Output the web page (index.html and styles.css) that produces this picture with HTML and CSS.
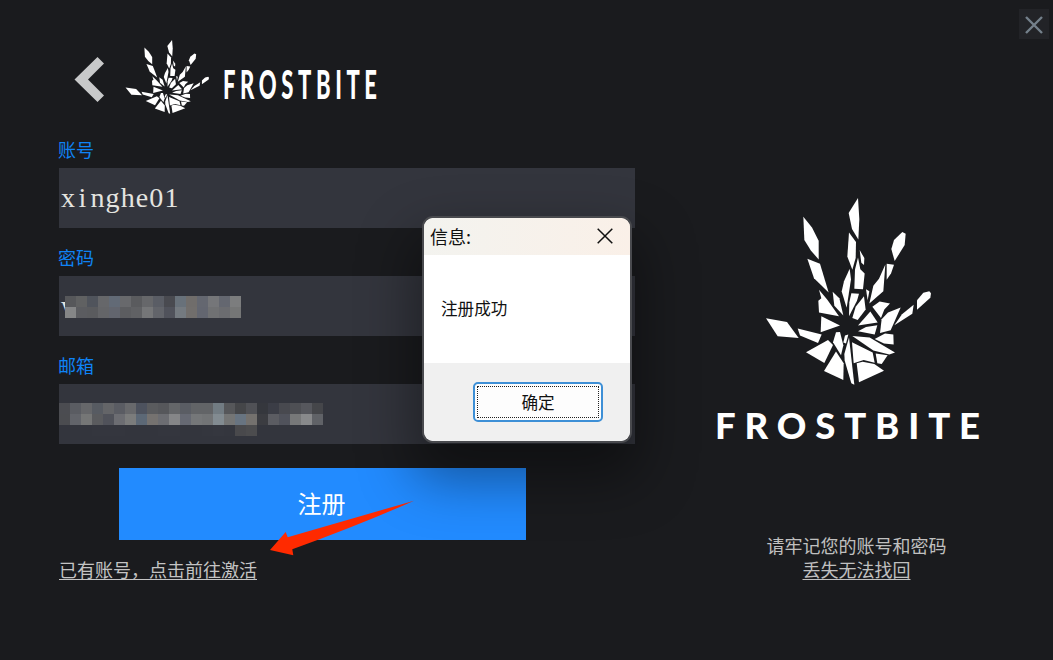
FILE: index.html
```html
<!DOCTYPE html>
<html lang="zh-CN">
<head>
  <meta charset="UTF-8" />
  <meta name="viewport" content="width=device-width, initial-scale=1.0" />
  <title>Frostbite</title>
  <link rel="stylesheet" href="styles.css">
</head>
<body>
  <svg class="defs" width="0" height="0">
    <symbol id="hand" viewBox="45 25 498 560" preserveAspectRatio="none">
      <path d="M324 25L328 88L325 149L306 118L296 70Z"/>
      <path d="M160 81L186 113L206 153L206 209L183 183L163 151Z"/>
      <path d="M457 127L467 132L464 166L434 214L424 178L432 151Z"/>
      <path d="M297 128L318 157L317 205L307 240L292 200Z"/>
      <path d="M329 181L343 205L342 226L334 219Z"/>
      <path d="M324 203L331 238L344 251L339 298L313 297L315 239Z"/>
      <path d="M172 207L210 222L236 308L192 265Z"/>
      <path d="M410 222L432 225L423 251L410 270Z"/>
      <path d="M406 224L400 304L358 341L370 288L387 267Z"/>
      <path d="M299 237L303 268L290 354L275 305L282 274Z"/>
      <path d="M538 304L543 310L541 324L501 360L501 331L520 309Z"/>
      <path d="M248 306L268 325L280 377L253 348Z"/>
      <path d="M207 300L232 330L267 379L207 368L205 333L214 325Z"/>
      <path d="M304 310L327 312L321 333L297 379L298 337Z"/>
      <path d="M348 298L358 304L353 331Z"/>
      <path d="M342 319L347 359L323 390L307 384L317 351Z"/>
      <path d="M367 351L389 335L420 341L403 359L393 384Z"/>
      <path d="M361 365L383 398L324 407Z"/>
      <path d="M452 353L422 421L390 429L395 388L414 368Z"/>
      <path d="M491 345L487 372L433 406L456 373Z"/>
      <path d="M214 379L270 407L212 427Z"/>
      <path d="M48 385L111 396L146 444L83 439Z"/>
      <path d="M143 416L215 434L204 459L150 437Z"/>
      <path d="M324 424L348 411L382 406L374 434Z"/>
      <path d="M374 447L405 431L430 434L431 464L402 461Z"/>
      <path d="M307 438L359 443L435 488L418 494L370 482Z"/>
      <path d="M258 427L270 426L280 466L273 496L249 457Z"/>
      <path d="M285 437L295 434L288 461L280 458Z"/>
      <path d="M297 443L313 584L304 580L284 512L283 492Z"/>
      <path d="M306 457L368 488L374 518L341 510L311 520Z"/>
      <path d="M234 450L249 465L223 519L168 487Z"/>
      <path d="M258 485L281 520L280 570L222 543Z"/>
      <path d="M377 491L413 496L395 522L382 520Z"/>
      <path d="M320 520L338 515L373 522L402 542L327 577Z"/>
    </symbol>
  </svg>

  <div class="window">
    <button class="close-window" aria-label="关闭">
      <svg width="18" height="18" viewBox="0 0 18 18"><path d="M1 1L17 17M17 1L1 17"/></svg>
    </button>

    <main class="register">
      <header class="brand">
        <svg class="back" width="31" height="46" viewBox="0 0 31 46"><path d="M23.500 0L30 6.500L14 22.500L30 38.500L23.500 45L0.500 22.500Z"/></svg>
        <svg class="brand-hand"><use href="#hand"/></svg>
        <svg class="brand-name" width="166" height="60" viewBox="0 0 166 60">
          <text transform="translate(4 44) scale(.55 1)" font-size="40" textLength="280">FROSTBITE</text>
        </svg>
      </header>

      <form class="form">
        <label class="label">账号</label>
        <div class="field">x<span class="narrow">i</span>nghe01</div>
        <label class="label">密码</label>
        <div class="field">w<div class="mosaic password" id="password"></div></div>
        <label class="label">邮箱</label>
        <div class="field"><div class="mosaic email" id="email"></div></div>
        <button type="button" class="submit">注册</button>
        <a class="activate">已有账号，点击前往激活</a>
      </form>
    </main>

    <aside class="side">
      <svg class="side-hand"><use href="#hand"/></svg>
      <svg class="side-name" width="286" height="56" viewBox="0 0 286 56">
        <text x="10" y="41" font-size="36.500" textLength="265">FROSTBITE</text>
      </svg>
      <p class="note">请牢记您的账号和密码<br><u>丢失无法找回</u></p>
    </aside>

    <svg class="arrow" width="144" height="56" viewBox="0 0 144 56"><path d="M144 .7L17.700 37.300L15.700 32L0 50L23.300 55.300L22.300 49.300Q92 24 144 .7Z"/></svg>

    <div class="dialog">
      <div class="dialog-title">
        <span>信息:</span>
        <svg width="16" height="16" viewBox="0 0 16 16"><path d="M.7 .7L15.300 15.300M15.300 .7L.7 15.300"/></svg>
      </div>
      <div class="dialog-body">注册成功</div>
      <div class="dialog-footer"><button class="ok"><span>确定</span></button></div>
    </div>
  </div>

  <script src="script.js"></script>
</body>
</html>
```
FILE: styles.css
```css
body {
  margin: 0;
  background: #1a1b1e;
  font-family: "Noto Sans CJK SC", sans-serif;
}

button {
  padding: 0;
  border: none;
  font-family: inherit;
}

svg {
  display: block;
  flex: none;
}

.defs {
  position: absolute;
}

.window {
  position: relative;
  display: flex;
  width: 1053px;
  height: 660px;
  overflow: hidden;
}

.close-window {
  position: absolute;
  top: 9px;
  right: 4px;
  display: flex;
  align-items: center;
  justify-content: center;
  width: 30px;
  height: 30px;
  padding-top: 2px;
  background: #222327;
}

.close-window path {
  stroke: #74808b;
  stroke-width: 2.4;
}

.register {
  width: 577px;
  padding: 40px 0 0 58px;
}

.brand {
  display: flex;
  height: 74px;
  padding-left: 16px;
}

.back {
  margin-top: 17px;
  fill: #c8c9ca;
}

.brand-hand {
  width: 84px;
  height: 74px;
  margin-left: 20px;
  fill: #fff;
}

.brand-name {
  margin: 15px 0 0 10px;
}

.brand-name text,
.side-name text {
  fill: #fff;
  font-family: Lato, sans-serif;
  font-weight: 900;
}

.form {
  display: flex;
  flex-direction: column;
  padding-top: 23px;
}

.label {
  height: 24px;
  margin-bottom: 7px;
  color: #0f83f5;
  font-size: 18px;
  line-height: 24px;
}

.field {
  display: flex;
  align-items: center;
  box-sizing: border-box;
  height: 60px;
  margin: 0 0 17px 1px;
  padding-left: 2px;
  background: #33353d;
  color: #e4e4e0;
  font-family: "Liberation Serif", serif;
  font-size: 28px;
  letter-spacing: 1.1px;
}

.narrow {
  margin: 0 3px 0 2.5px;
}

.mosaic {
  display: grid;
  grid-auto-rows: 11px;
}

.password {
  grid-template-columns: repeat(16, 11px);
  margin: 2px 0 0 -17.3px;
}

.email {
  grid-template-columns: repeat(24, 11px);
  margin: 10px 0 0 -2px;
}

.submit {
  width: 407px;
  height: 72px;
  margin: 7px 0 17px 61px;
  padding: 0 2px 4px 0;
  background: #228bff;
  color: #fff;
  font-size: 24px;
}

.activate {
  align-self: flex-start;
  margin-left: 1px;
  color: #c4c4c4;
  font-size: 18px;
  line-height: 24px;
  text-decoration: underline;
  text-underline-offset: 2px;
}

.side {
  display: flex;
  flex-direction: column;
  align-items: center;
  width: 286px;
  padding: 198px 0 0 70px;
}

.side-hand {
  width: 166px;
  height: 187px;
  fill: #fff;
}

.side-name {
  margin-top: 13px;
}

.note {
  margin: 79px 0 0 17px;
  color: #c0c0c0;
  font-size: 18px;
  line-height: 24px;
  text-align: center;
}

.note u {
  text-underline-offset: 2px;
}

/* pointer over the button and the link */
.arrow {
  position: absolute;
  top: 500px;
  left: 270px;
  fill: #ff2a00;
}

.dialog {
  position: absolute;
  top: 216px;
  left: 422px;
  display: flex;
  flex-direction: column;
  width: 206px;
  height: 223px;
  border: 2px solid #494a4e;
  border-radius: 11px;
  background: #fff;
  background-clip: padding-box;
  color: #111;
  box-shadow: 0 28px 56px 8px rgba(0, 0, 0, 0.4);
  overflow: hidden;
}

.dialog-title {
  display: flex;
  align-items: center;
  justify-content: space-between;
  box-sizing: border-box;
  height: 37px;
  padding: 0 17px 2px 6px;
  background: linear-gradient(90deg, #f3f3ef, #faf0e8);
  font-size: 18px;
}

.dialog-title path {
  stroke: #111;
  stroke-width: 1.5;
}

.dialog-body {
  display: flex;
  align-items: center;
  box-sizing: border-box;
  height: 108px;
  padding: 0 0 2px 17px;
  font-size: 16.6px;
}

.dialog-footer {
  flex: 1;
  padding: 19px 0 0 49px;
  background: #f0f0f0;
}

.ok {
  width: 130px;
  height: 40px;
  padding: 2px;
  border: 2px solid #3d8fd6;
  border-radius: 5px;
  background: #fdfdfd;
  color: #111;
  font-size: 16.6px;
}

.ok span {
  display: flex;
  align-items: center;
  justify-content: center;
  box-sizing: border-box;
  height: 100%;
  border: 1px dotted #222;
}
```
FILE: script.js
```javascript
const masks = {
  password: [
    '56575a 606162 50545c 66676a 626a76 68696c 5a5b5e 66676a 5a5d65 494a50 68717a 706d6b 646770 757679 646770 7c7d7e',
    '858687 5b5c60 5a5b5e 646568 62656e 5c5d60 606164 757678 62646a 50525b 747a80 716e6c 636670 707173 6b6c70 757676'
  ],
  email: [
    '4b4c51 5a5c62 66676a 575b62 646568 5a5c63 68696c 4d525e 5a5b5e 56575b 646669 5a5d64 626467 626467 727c83 56575a 454649 505156 35373d 3b3d46 48494f 4e4f54 56575d 45464a',
    '4b4c50 62646a 757676 5a5b5e 50525a 6c6d72 7b7c7c 5c6876 757270 6c6d72 858688 666973 757779 727476 828b91 747575 687481 74716e 3b3c41 5b5c62 50525b 777879 88898b 606267',
    '33353d 33353d 33353d 34363e 34363e 34363e 33353d 33353d 33353d 34363e 34363e 33353d 33353d 34363e 35373f 34363e 49494c 4c4c4e'
  ]
};

for (const id in masks) {
  const box = document.getElementById(id);
  masks[id].join(' ').split(' ').forEach(color => {
    const cell = document.createElement('span');
    cell.style.background = '#' + color;
    box.appendChild(cell);
  });
}
```
